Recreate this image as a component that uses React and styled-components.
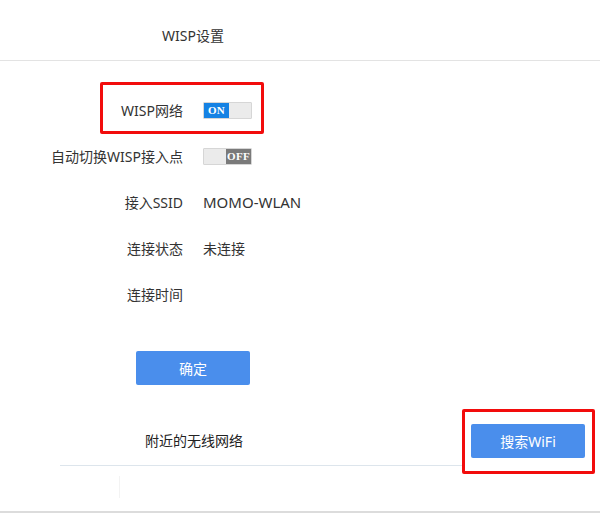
import React from "react";
import styled, { createGlobalStyle } from "styled-components";

const Global = createGlobalStyle`
  html, body { margin: 0; padding: 0; background: #fff; }
  body { font-family: "Noto Sans", "Noto Sans CJK SC", sans-serif; color: #333; }
  * { box-sizing: border-box; }
`;

const Page = styled.div`
  width: 600px;
  height: 513px;
  display: flex;
  flex-direction: column;
  background: #fff;
  overflow: hidden;
`;

const Header = styled.div`
  height: 61px;
  border-bottom: 1px solid #e3e3e3;
  display: flex;
  align-items: center;
  padding-left: 162px;
  padding-top: 10px;
  font-size: 14px;
  color: #333;
`;

const Form = styled.div`
  display: flex;
  flex-direction: column;
  padding-top: 26px;
`;

const Row = styled.div`
  position: relative;
  height: 46px;
  display: flex;
  align-items: center;
  gap: 20px;
`;

const Label = styled.div`
  width: 183px;
  text-align: right;
  font-size: 14px;
  color: #333;
  white-space: nowrap;
`;

const Value = styled.div`
  font-size: ${(p) => (p.$big ? "15px" : "14px")};
  color: #333;
`;

const Highlight = styled.div`
  position: absolute;
  left: ${(p) => p.$left}px;
  top: ${(p) => p.$top}px;
  width: ${(p) => p.$w}px;
  height: ${(p) => p.$h}px;
  border: 3px solid #f20c0c;
  border-radius: 2px;
  pointer-events: none;
`;

const Toggle = styled.div`
  width: 49px;
  height: 17px;
  display: flex;
  justify-content: ${(p) => (p.$on ? "flex-start" : "flex-end")};
  background: #ebebeb;
  border: 1px solid #d6d6d6;
  border-radius: 1px;
`;

const Knob = styled.div`
  width: 25px;
  height: 100%;
  background: ${(p) => (p.$on ? "#1582e4" : "#7a7a7a")};
  color: #fff;
  font-family: "Liberation Serif", "DejaVu Serif", serif;
  font-weight: bold;
  font-size: 11px;
  line-height: 15px;
  text-align: center;
  letter-spacing: 0.3px;
`;

const PrimaryButton = styled.button`
  width: 114px;
  height: 34px;
  border: none;
  border-radius: 2px;
  background: #4a8eec;
  color: #fff;
  font-family: "Noto Sans", "Noto Sans CJK SC", sans-serif;
  font-size: 14px;
  padding: 0;
`;

const ConfirmWrap = styled.div`
  padding-left: 136px;
  margin-top: 34px;
`;

const Section = styled.div`
  position: relative;
  margin-top: 39px;
  margin-left: 60px;
  display: flex;
  align-items: center;
  justify-content: space-between;
  padding-right: 15px;
  padding-bottom: 7px;
`;

const SectionTitle = styled.div`
  font-size: 14px;
  color: #222;
  padding-left: 85px;
  padding-bottom: 3px;
`;

const SectionLine = styled.div`
  margin-left: 60px;
  width: 402px;
  height: 1px;
  background: #dde5ec;
`;

const Spacer = styled.div`
  flex: 1;
  position: relative;
`;

const FaintDivider = styled.div`
  position: absolute;
  left: 119px;
  top: 10px;
  width: 1px;
  height: 22px;
  background: #f3f3f3;
`;

const BottomBar = styled.div`
  height: 2px;
  background: #dcdcdc;
`;

export default function App() {
  return (
    <Page>
      <Global />
      <Header>WISP设置</Header>
      <Form>
        <Row>
          <Highlight $left={100} $top={-5} $w={164} $h={52} />
          <Label>WISP网络</Label>
          <Toggle $on>
            <Knob $on>ON</Knob>
          </Toggle>
        </Row>
        <Row>
          <Label>自动切换WISP接入点</Label>
          <Toggle>
            <Knob>OFF</Knob>
          </Toggle>
        </Row>
        <Row>
          <Label>接入SSID</Label>
          <Value $big>MOMO-WLAN</Value>
        </Row>
        <Row>
          <Label>连接状态</Label>
          <Value>未连接</Value>
        </Row>
        <Row>
          <Label>连接时间</Label>
          <Value />
        </Row>
      </Form>
      <ConfirmWrap>
        <PrimaryButton>确定</PrimaryButton>
      </ConfirmWrap>
      <Section>
        <SectionTitle>附近的无线网络</SectionTitle>
        <PrimaryButton>搜索WiFi</PrimaryButton>
        <Highlight $left={402} $top={-15} $w={133} $h={65} />
      </Section>
      <SectionLine />
      <Spacer>
        <FaintDivider />
      </Spacer>
      <BottomBar />
    </Page>
  );
}
